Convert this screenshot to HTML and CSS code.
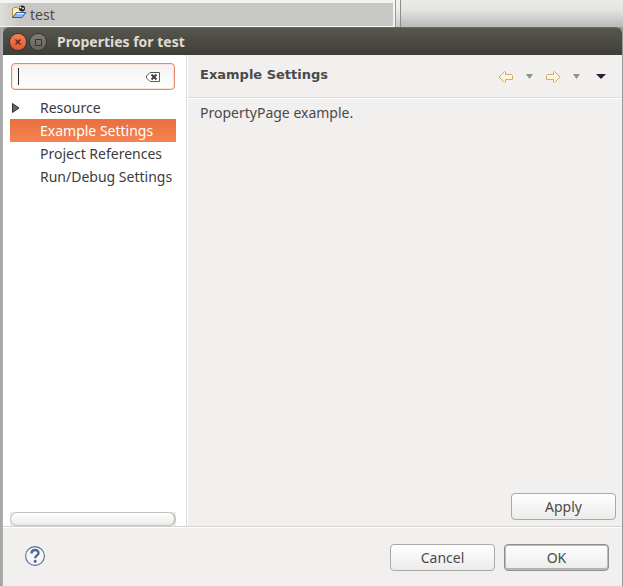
FILE: index.html
```html
<!DOCTYPE html>
<html lang="en">
<head>
<meta charset="utf-8">
<title>Properties for test</title>
<link rel="stylesheet" href="styles.css">
</head>
<body>
<div class="workbench">
  <div class="explorer">
    <div class="explorer-row">
      <svg class="folder" width="16" height="14" viewBox="0 0 16 14" aria-hidden="true">
        <path d="M1.500 12V4L3 2.500H6L7.500 4H12V7" fill="#fff0b8" stroke="#b98a35"/>
        <path d="M1.500 12.500L5.500 7.500H15L11 12.500Z" fill="#8fbcf0" stroke="#3d5799"/>
        <path d="M6 8.500H13" stroke="#e4f3ff"/>
        <circle cx="11" cy="3.500" r="3" fill="#222"/>
        <circle cx="9.500" cy="2.500" r="1" fill="#fff"/><circle cx="12" cy="3.500" r="1" fill="#ddd"/>
      </svg>
      <span>test</span>
    </div>
  </div>
  <div class="editor"></div>
</div>
<main class="dialog">
  <header class="titlebar">
    <button class="window-button close" aria-label="Close"><svg width="16" height="16" viewBox="0 0 16 16"><path d="M5.500 5.500L10.500 10.500M10.500 5.500L5.500 10.500" stroke="#41301f" stroke-width="1.300"/></svg></button>
    <button class="window-button" aria-label="Maximize"><svg width="16" height="16" viewBox="0 0 16 16"><path d="M5.500 5.500H11.500V11.500H5.500Z" fill="none" stroke="#35342f"/></svg></button>
    <h1>Properties for test</h1>
  </header>
  <div class="content">
    <nav class="sidebar">
      <div class="search">
        <input type="text" aria-label="Filter properties">
        <span class="caret"></span>
        <button class="clear" aria-label="Clear filter"><svg width="16" height="12" viewBox="0 0 16 12"><path d="M5 1.500H14.500V10.500H5L1.500 7V5Z" fill="#fff" stroke="#5b5b59"/><path d="M6.500 3.500L11.500 8.500M11.500 3.500L6.500 8.500" stroke="#3e3e3c" stroke-width="2"/></svg></button>
      </div>
      <ul class="tree">
        <li><svg class="expander" width="8" height="10" viewBox="0 0 8 10" aria-hidden="true"><path d="M.5 .5L7 5L.5 9.500Z" fill="#666" stroke="#333"/></svg><a href="#">Resource</a></li>
        <li class="selected"><a href="#">Example Settings</a></li>
        <li><a href="#">Project References</a></li>
        <li><a href="#">Run/Debug Settings</a></li>
      </ul>
      <div class="scroll-track"><div class="scroll-thumb"></div></div>
    </nav>
    <section class="page">
      <header class="page-header">
        <h2>Example Settings</h2>
        <div class="history">
          <button aria-label="Back"><svg width="16" height="14" viewBox="0 0 16 14"><path d="M1 7L6.500 1.500L7.500 2V4.500H13.500L14.500 5.500V9.500H7.500V12L6.500 12.500Z" fill="#fff5dc" stroke="#d6ac6c"/></svg></button>
          <button class="small" aria-label="Back history"><svg width="7" height="5" viewBox="0 0 7 5"><path d="M0 0H7L3.500 5Z" fill="#91918e"/></svg></button>
          <button aria-label="Forward"><svg width="16" height="14" viewBox="0 0 16 14"><path d="M15 7L9.500 1.500L8.500 2V4.500H2.500L1.500 5.500V9.500H8.500V12L9.500 12.500Z" fill="#fff5dc" stroke="#d6ac6c"/></svg></button>
          <button class="small" aria-label="Forward history"><svg width="7" height="5" viewBox="0 0 7 5"><path d="M0 0H7L3.500 5Z" fill="#91918e"/></svg></button>
          <button class="menu" aria-label="View menu"><svg width="10" height="5" viewBox="0 0 10 5"><path d="M0 0H10L5 5Z" fill="#2c2038"/></svg></button>
        </div>
      </header>
      <p>PropertyPage example.</p>
      <div class="apply"><button class="button">Apply</button></div>
    </section>
  </div>
  <footer class="footer">
    <button class="help" aria-label="Help"><svg width="20" height="20" viewBox="0 0 20 20"><circle cx="10" cy="10" r="9.400" fill="#f5f6f7" stroke="#596d91" stroke-width="1.100"/><path d="M6.500 7.500C6.500 3 13.500 3 13.500 7C13.500 9.500 10.200 9.300 10.200 12.300" fill="none" stroke="#526890" stroke-width="2.400"/><circle cx="10.200" cy="15.300" r="1.500" fill="#526890"/></svg></button>
    <button class="button">Cancel</button>
    <button class="button default">OK</button>
  </footer>
</main>
</body>
</html>
```
FILE: styles.css
```css
* { box-sizing: border-box; }
body {
  display: flex;
  flex-direction: column;
  min-height: 100vh;
  margin: 0;
  background: linear-gradient(90deg, #a3a3a2, #b2b2b1 3px, #999 3px);
  color: #4a4a4a;
  font: 14px/23px "Noto Sans", sans-serif;
}
button {
  padding: 0;
  border: 0;
  background: none;
  color: inherit;
  font: inherit;
}
svg { display: block; }
h1, h2, p, ul { margin: 0; padding: 0; }
.workbench {
  display: flex;
  height: 27px;
  background: linear-gradient(#f4f4f3, #ececeb 10px, #c9c9c7);
}
.explorer {
  flex: 0 0 396px;
  padding: 3px 2px 1px 0;
  border-right: 1px solid #9a9a98;
  background: #f3f3f2;
}
.explorer-row {
  display: flex;
  gap: 3px;
  height: 23px;
  padding-left: 11px;
  background: linear-gradient(90deg, #dededd, #c9c7c4 20px);
}
.folder { margin-top: 2px; }
.editor {
  flex: 1;
  margin-left: 4px;
  border-left: 1px solid #8d8d8b;
  background: linear-gradient(#eaeae9, #e4e4e3 10px, #b9b9b7);
}
.dialog {
  display: flex;
  flex: 1;
  flex-direction: column;
  margin: 0 1px 0 3px;
  border-radius: 6px 6px 0 0;
  background: #f1f0ef;
  overflow: hidden;
}
.titlebar {
  display: flex;
  align-items: center;
  gap: 4px;
  height: 28px;
  padding-left: 7px;
  border-top: 1px solid #6b6a5a;
  background: linear-gradient(#58574d, #3e3d38);
  color: #dfdbd2;
}
.window-button {
  width: 16px;
  height: 16px;
  border-radius: 50%;
  background: linear-gradient(#7f7e76, #65645d);
  box-shadow: 0 0 0 1px #35342f;
}
.close { background: linear-gradient(#f57f58, #e4572a); }
h1 {
  margin-left: 7px;
  font-size: 14px;
}
.content {
  display: flex;
  flex: 1;
}
.sidebar {
  display: flex;
  flex: 0 0 184px;
  flex-direction: column;
  min-width: 0;
  padding: 8px 10px 0 7px;
  border-right: 1px solid #dcdbda;
  background: #fff;
}
.search {
  display: flex;
  align-items: center;
  height: 27px;
  margin: 0 1px;
  padding: 0 13px 0 6px;
  border: 1px solid #e38b68;
  border-radius: 4px;
  background: linear-gradient(#f2f2f2, #fff);
  box-shadow: inset 0 0 0 1px #fae3da;
}
.search input {
  order: 1;
  flex: 1;
  width: 0;
  min-width: 0;
  padding: 0;
  border: 0;
  outline: 0;
  background: transparent;
  font: inherit;
}
.caret {
  width: 1px;
  height: 17px;
  background: #222;
}
.clear { order: 2; }
.tree {
  margin-top: 6px;
  list-style: none;
}
.tree li {
  display: flex;
  align-items: center;
  height: 23px;
  padding-left: 30px;
  white-space: nowrap;
}
.expander {
  margin-left: -28px;
  margin-right: 20px;
}
.tree a {
  color: #3c3c3c;
  text-decoration: none;
}
.tree .selected { background: linear-gradient(#e96f3d, #f58352); }
.tree .selected a { color: #fff; }
.scroll-track {
  margin-top: auto;
  background: #eeeceb;
}
.scroll-thumb {
  height: 14px;
  border: 1px solid #c5c2be;
  border-right-width: 2px;
  border-radius: 7px;
  background: linear-gradient(#fff, #ebebea);
}
.page {
  display: flex;
  flex: 1;
  flex-direction: column;
  border-left: 1px solid #fff;
}
.page-header {
  display: flex;
  align-items: center;
  justify-content: space-between;
  height: 43px;
  padding: 0 16px 3px 12px;
  border-bottom: 1px solid #dcdbda;
  box-shadow: 0 1px #fff;
}
h2 {
  font: bold 13px/23px "DejaVu Sans", sans-serif;
}
.history {
  display: flex;
  align-items: center;
  margin-top: 4px;
}
.history .small { margin: 0 12px; }
.history .menu { margin-left: 4px; }
.page p { padding: 3px 12px; }
.apply {
  display: flex;
  justify-content: flex-end;
  margin-top: auto;
  padding: 0 6px 6px 0;
}
.button {
  width: 105px;
  height: 27px;
  border: 1px solid #aaa9a7;
  border-radius: 4px;
  background: linear-gradient(#fff, #ebebea);
}
.default {
  border-color: #8f8f8d;
  box-shadow: inset 0 0 0 1px #bbb, inset 0 -2px #b0b0ae;
}
.footer {
  display: flex;
  gap: 9px;
  height: 60px;
  padding: 17px 13px 0 22px;
  border-top: 1px solid #d5d4d3;
  box-shadow: inset 0 1px #fff;
}
.help {
  align-self: flex-start;
  margin-top: 2px;
  margin-right: auto;
}
```
